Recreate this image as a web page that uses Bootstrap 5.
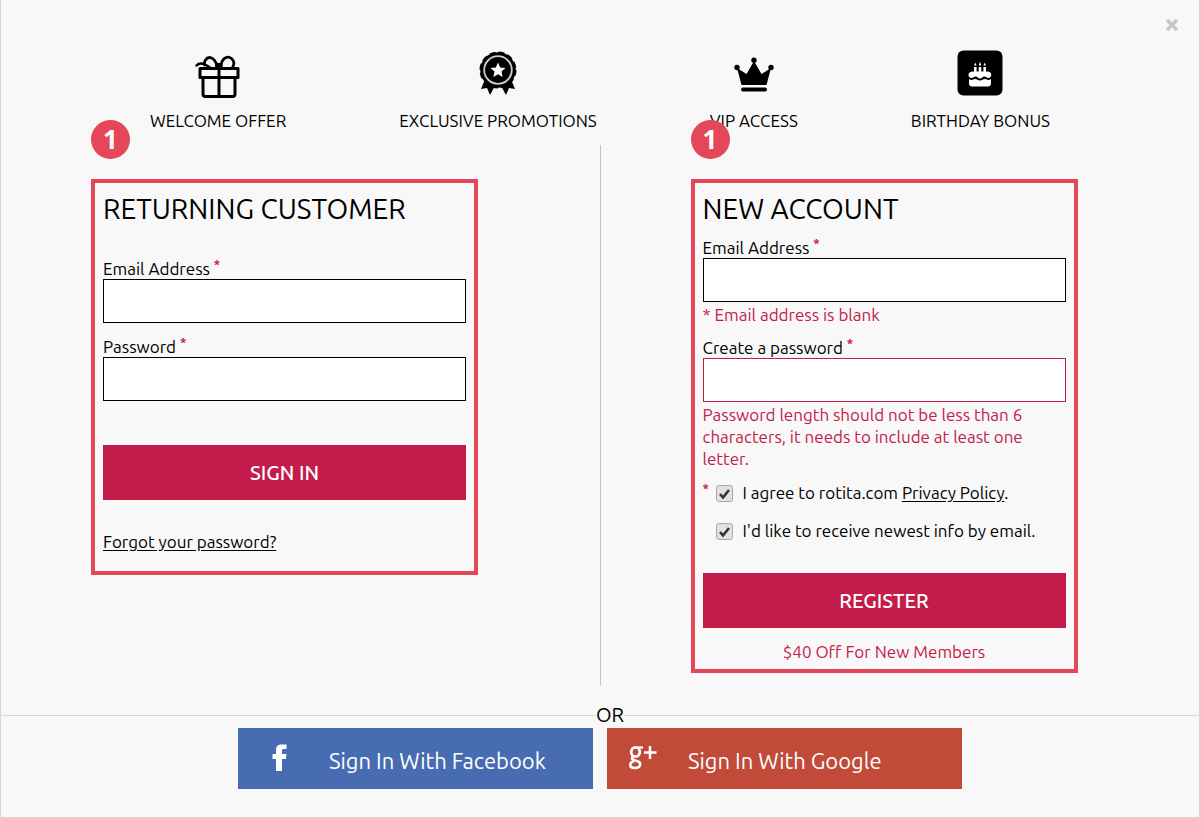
<!DOCTYPE html>
<html lang="en">
<head>
<meta charset="utf-8">
<meta name="viewport" content="width=device-width, initial-scale=1">
<title>Sign in or create an account</title>
<link href="https://cdn.jsdelivr.net/npm/bootstrap@5.3.0/dist/css/bootstrap.min.css" rel="stylesheet">
<style>
  :root { --crimson: #c41c4a; --frame: #e4475a; --rule: #d6d6d6; }
  body { background: #f8f8f8; color: #000; font-family: Ubuntu, "Noto Sans", sans-serif; font-size: 17px; line-height: 22px; }
  .dialog { min-height: 100vh; border: solid var(--rule); border-width: 0 1px 1px; padding-top: 49px; }
  .dialog-close { position: absolute; top: 18px; right: 20px; width: 14px; height: 14px; }
  .dialog-close svg { display: block; }
  .perks { gap: 0 113px; margin-bottom: 13px; }
  .perk-icon { height: 48px; margin-bottom: 13px; display: flex; align-items: center; justify-content: center; }
  .half { padding: 34px 20px 13px 90px; }
  .divider { width: 1px; background: #c4c4c4; }
  .frame { max-width: 387px; border: 4px solid var(--frame); padding: 10px 8px 0; }
  .frame h2 { font-size: 28px; line-height: 32px; font-weight: 400; margin: 0 0 13px; }
  .frame .spaced-title { margin-bottom: 34px; }
  .step { position: absolute; left: -4px; top: -63px; width: 39px; height: 39px; border-radius: 50%; background: var(--frame); color: #fff; font: 700 26px/39px "Open Sans", sans-serif; text-align: center; }
  .field { margin-bottom: 14px; }
  .field label { display: block; line-height: 20px; }
  .req { color: var(--crimson); font-weight: 700; }
  .field .form-control { height: 44px; border: 1px solid #000; border-radius: 0; background: #fff; }
  .field .form-control.bad { border-color: var(--crimson); }
  .note { color: var(--crimson); margin: 0; }
  .error { margin: 2px 0 -2px; }
  .btn-main { height: 55px; background: var(--crimson); color: #fff; border: 0; border-radius: 0; font-size: 20px; font-weight: 500; }
  .btn-main:hover { background: #a8163e; color: #fff; }
  .sign-in { margin: 30px 0 31px; }
  .register { margin: 31px 0 13px; }
  .forgot { margin: 0 0 18px; }
  .offer { padding-bottom: 6px; }
  .dialog a { color: #000; text-underline-offset: 2px; }
  .tick { width: 17px; height: 17px; margin: 0 10px 0 0; appearance: none; border: 1px solid #a8a8a8; border-radius: 3px;
    background: #e2e2e2 url("data:image/svg+xml,%3Csvg xmlns='http://www.w3.org/2000/svg' viewBox='0 0 15 15'%3E%3Cpath d='M3 8l3 3.500L12 4' fill='none' stroke='%23333' stroke-width='2.600'/%3E%3C/svg%3E") center / 15px no-repeat; }
  .tick:not(:checked) { background-image: none; }
  .star { width: 13px; }
  .or-row { margin: 18px 0 2px; }
  .or-row hr { margin: 0; border-color: var(--rule); opacity: 1; }
  .or-row hr:first-child { flex: 0 0 calc(50% - 4px); }
  .or-row span { font-size: 20px; line-height: 22px; }
  .socials { gap: 14px; }
  .social { width: 355px; height: 61px; border: 0; border-radius: 0; color: #fff; font-size: 22px; padding: 0; text-align: left; display: flex; align-items: center; }
  .social:hover { color: #fff; }
  .social span { padding-top: 4px; }
  .social svg { flex: none; }
  .facebook { background: #486cb2; }
  .facebook:hover { background: #3c5c9c; }
  .google { background: #c14a39; }
  .google:hover { background: #a83e2f; }
</style>
</head>
<body>
<main class="dialog position-relative">
  <button type="button" class="dialog-close btn p-0 border-0" aria-label="Close">
    <svg width="14" height="14" viewBox="0 0 14 14"><path d="M2 2l10 10M12 2L2 12" stroke="#c6c6c6" stroke-width="3.600"/></svg>
  </button>

  <div class="perks d-flex flex-wrap justify-content-center text-center">
    <div>
      <div class="perk-icon pt-2">
        <svg width="46" height="44" viewBox="0 0 46 44" fill="none" stroke="#000" stroke-width="3" stroke-linejoin="round" stroke-linecap="round">
          <path d="M5 13.500h38v9H5zM8 23v16c0 1.500 1 2.500 2.500 2.500h27c1.500 0 2.500-1 2.500-2.500V23M24 14v27"/>
          <path d="M22 11C20 3 14 0 10.500 5c-1 1.500-1.500 3-1 5M26 12c0-8 6-12 10.500-8.500 3.500 3 2.500 6.500 1 9" stroke-width="2.800"/>
          <path d="M1.500 10.500c4-4.500 9-1.500 14 2.500" stroke-width="2.400"/>
          <path d="M21 8l6 1v5h-6z" fill="#000" stroke-width="1"/>
        </svg>
      </div>
      WELCOME OFFER
    </div>
    <div>
      <div class="perk-icon">
        <svg width="38" height="44" viewBox="0 0 38 44">
          <path d="M7 26L2 38l6-1 3 7 6-11h4l6 11 3-7 6 1-5-12z"/>
          <circle cx="19" cy="19" r="17.800"/>
          <circle cx="19" cy="19" r="17.500" fill="none" stroke="#000" stroke-width="2" stroke-dasharray="5.900 3.263"/>
          <circle cx="19" cy="19" r="13.800" fill="none" stroke="#ccc" stroke-width="1.800"/>
          <path fill="#fff" d="M19 11.500l2.200 4.900 5.300.6-4 3.600 1.100 5.300-4.600-2.700-4.600 2.700 1.100-5.300-4-3.600 5.300-.6z"/>
        </svg>
      </div>
      EXCLUSIVE PROMOTIONS
    </div>
    <div>
      <div class="perk-icon pt-1">
        <svg width="40" height="36" viewBox="0 0 40 36">
          <path d="M7.500 28L3 11l9.500 6L20 4l7.500 13L37 11l-4.500 17z"/>
          <circle cx="20" cy="3.200" r="2.700"/><circle cx="3" cy="10.500" r="2.700"/><circle cx="37" cy="10.500" r="2.700"/>
          <rect x="7" y="30.500" width="26" height="4" rx="2"/>
        </svg>
      </div>
      VIP ACCESS
    </div>
    <div>
      <div class="perk-icon">
        <svg width="46" height="46" viewBox="0 0 46 46">
          <rect x=".5" y=".5" width="45" height="45" rx="6"/>
          <g fill="#fff">
            <path d="M17 17h2.600v6H17zM21.700 17h2.600v6h-2.600zM26.400 17H29v6h-2.600zM18.300 12.500l1.300 3h-2.600zM23 11.500l1.300 4h-2.600zM27.700 12.500l1.300 3h-2.600z"/>
            <path d="M16 21.500h14c6 0 5 6.500 1.500 6.500-2 0-2-1.500-4-1.500s-2.500 2-4.500 2-2.500-2-4.500-2-2 1.500-4 1.500c-4 0-4.500-6.500 1.500-6.500z"/>
            <path d="M12 29c3 2 4 0 6 0s3 1.500 5 1.500 3-1.500 5-1.500 3 2 6 0v4.500c0 2-1.500 3-3 3H15c-2 0-3-1-3-3z"/>
          </g>
        </svg>
      </div>
      BIRTHDAY BONUS
    </div>
  </div>

  <div class="d-flex">
    <div class="half flex-fill w-50">
      <form class="frame position-relative">
        <span class="step">1</span>
        <h2 class="spaced-title">RETURNING CUSTOMER</h2>
        <div class="field">
          <label for="login-email">Email Address <sup class="req">*</sup></label>
          <input type="email" id="login-email" class="form-control">
        </div>
        <div class="field">
          <label for="login-pass">Password <sup class="req">*</sup></label>
          <input type="password" id="login-pass" class="form-control">
        </div>
        <button type="button" class="btn btn-main sign-in w-100">SIGN IN</button>
        <p class="forgot"><a href="#">Forgot your password?</a></p>
      </form>
    </div>
    <div class="divider"></div>
    <div class="half flex-fill w-50">
      <form class="frame position-relative">
        <span class="step">1</span>
        <h2>NEW ACCOUNT</h2>
        <div class="field">
          <label for="new-email">Email Address <sup class="req">*</sup></label>
          <input type="email" id="new-email" class="form-control">
          <p class="note error">* Email address is blank</p>
        </div>
        <div class="field">
          <label for="new-pass">Create a password <sup class="req">*</sup></label>
          <input type="password" id="new-pass" class="form-control bad">
          <p class="note error">Password length should not be less than 6 characters, it needs to include at least one letter.</p>
        </div>
        <div class="d-flex align-items-center mb-3">
          <span class="star"><sup class="req">*</sup></span>
          <input type="checkbox" class="tick" id="agree" checked>
          <label for="agree">I agree to rotita.com <a href="#">Privacy Policy</a>.</label>
        </div>
        <div class="d-flex align-items-center">
          <span class="star"></span>
          <input type="checkbox" class="tick" id="news" checked>
          <label for="news">I'd like to receive newest info by email.</label>
        </div>
        <button type="button" class="btn btn-main register w-100">REGISTER</button>
        <p class="note offer text-center">$40 Off For New Members</p>
      </form>
    </div>
  </div>

  <div class="or-row d-flex align-items-center">
    <hr><span>OR</span><hr class="flex-fill">
  </div>
  <div class="socials d-flex flex-wrap justify-content-center">
    <button type="button" class="btn social facebook">
      <svg width="91" height="61" viewBox="0 0 91 61"><path fill="#fff" d="M38 43V31h-3.500v-5H38v-3.500c0-4.500 2-6 6-6h4.500V21h-2.500c-1.500 0-2 .6-2 2v3h4.500l-.6 5H44v12z"/></svg>
      <span>Sign In With Facebook</span>
    </button>
    <button type="button" class="btn social google">
      <svg width="81" height="61" viewBox="0 0 81 61" fill="none" stroke="#fff"><ellipse cx="28.500" cy="24" rx="4.300" ry="4.700" stroke-width="2.800"/><path d="M30 19.500h6" stroke-width="2.200"/><path d="M26 28.500c-3 3 1 3.500 4 4.500 5 1.500 4 7-2 7s-6.500-5-1-7" stroke-width="2.500"/><path d="M43 18v13M37 24.500h12.500" stroke-width="2.500"/></svg>
      <span>Sign In With Google</span>
    </button>
  </div>
</main>
<script src="https://cdn.jsdelivr.net/npm/bootstrap@5.3.0/dist/js/bootstrap.bundle.min.js"></script>
</body>
</html>
